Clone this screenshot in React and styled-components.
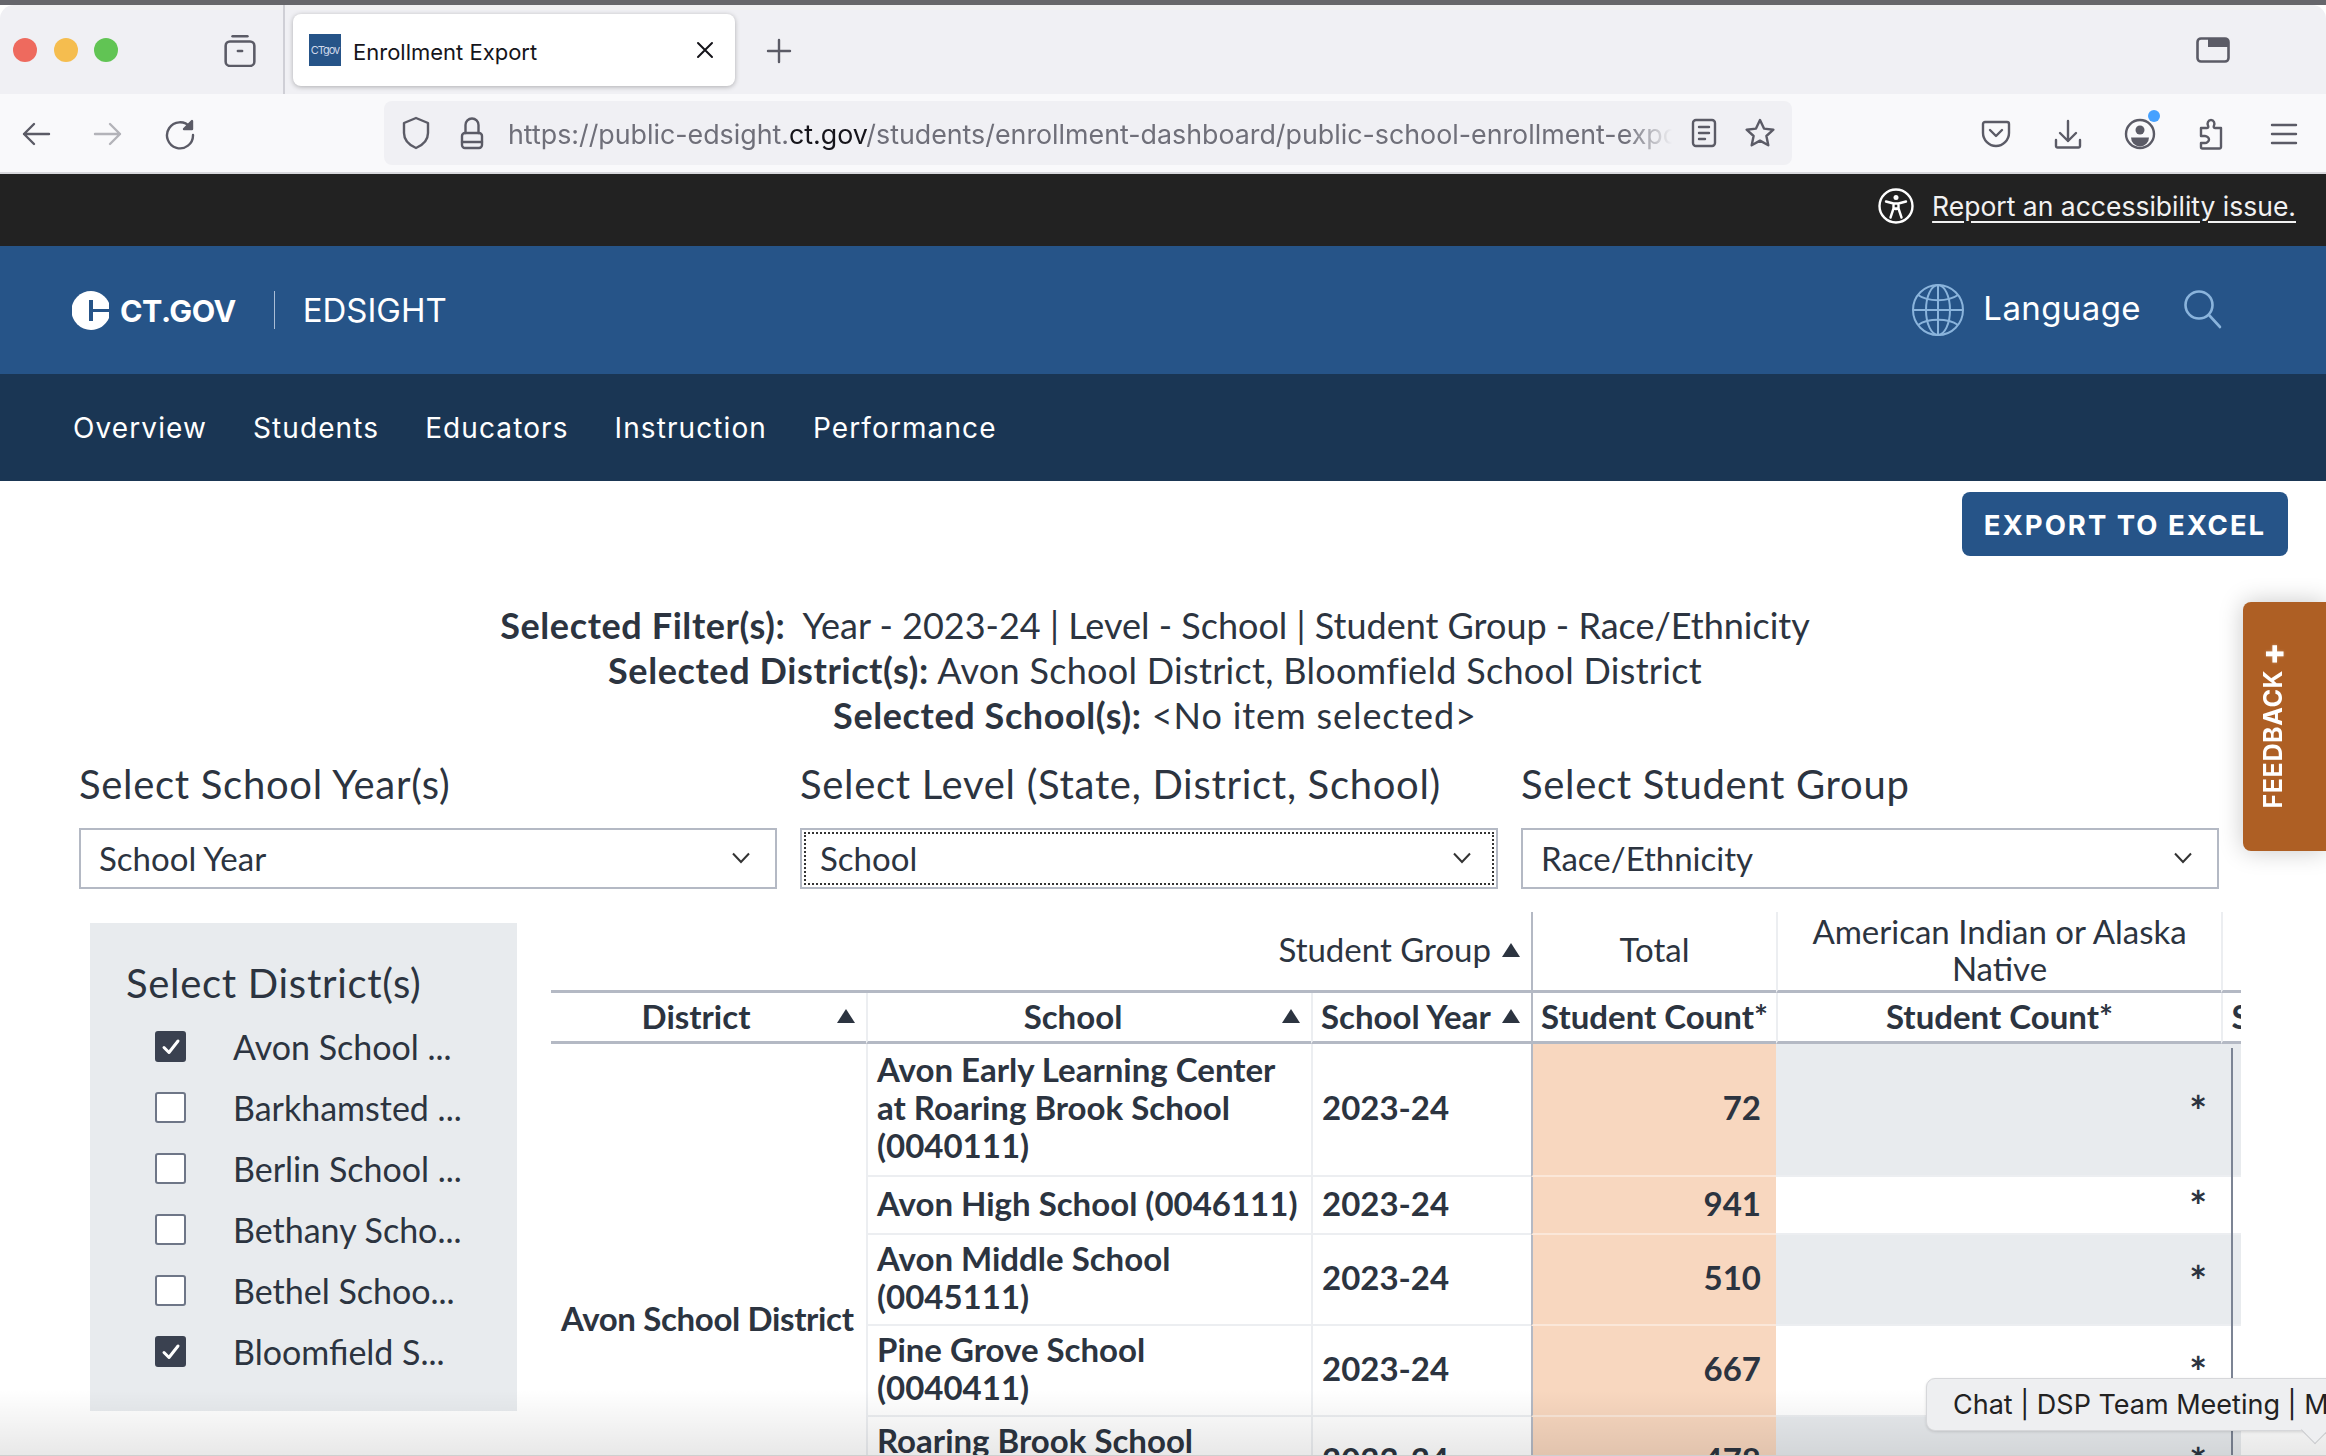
import React from "react";
import styled, { createGlobalStyle } from "styled-components";

const Global = createGlobalStyle`
  html, body { margin: 0; padding: 0; background: #fff; }
  * { box-sizing: border-box; }
  #root { width: 2326px; height: 1456px; overflow: hidden; position: relative; }
`;

const ui = `Inter, "Liberation Sans", sans-serif`;
const body = `Lato, "Noto Sans", sans-serif`;
const ink = "#2c3440";
const rule = "#b4b9c4";
const soft = "#eceef1";

const Page = styled.div`
  width: 2326px;
  height: 1456px;
  position: relative;
  overflow: hidden;
  background: #fff;
  color: ${ink};
  font-family: ${body};
`;

const TopEdge = styled.div`
  height: 5px;
  background: #66666c;
`;

const TabStrip = styled.div`
  height: 89px;
  background: #f0f0f4;
  border-radius: 14px 14px 0 0;
  display: flex;
  align-items: center;
  font-family: ${ui};
`;

const Lights = styled.div`
  display: flex;
  gap: 16.5px;
  padding-left: 13px;
`;

const Light = styled.span`
  width: 24px;
  height: 24px;
  border-radius: 50%;
  background: ${(p) => p.$c};
`;

const ViewSlot = styled.div`
  width: 36px;
  height: 36px;
  margin-left: 104px;
  display: flex;
  align-items: center;
  justify-content: center;
`;

const TabDivider = styled.div`
  width: 2px;
  height: 89px;
  margin-left: 25px;
  background: #cfcfd6;
`;

const Tab = styled.div`
  width: 442px;
  height: 72px;
  margin-left: 8px;
  margin-top: 1px;
  background: #fff;
  border-radius: 8px;
  box-shadow: 0 1px 5px rgba(0, 0, 0, 0.28);
  display: flex;
  align-items: center;
  padding-left: 16px;
  padding-right: 20px;
`;

const Favicon = styled.div`
  width: 32px;
  height: 32px;
  background: #265488;
  color: #cfd8ea;
  font-size: 11px;
  line-height: 32px;
  text-align: center;
  overflow: hidden;
  letter-spacing: -1px;
`;

const TabTitle = styled.span`
  margin-left: 12px;
  padding-top: 3px;
  font-size: 22px;
  color: #15141a;
  flex: 1;
`;

const NewTab = styled.div`
  margin-left: 31px;
  margin-top: 2px;
  display: flex;
`;

const WindowSlot = styled.div`
  margin-left: auto;
  margin-right: 96px;
  display: flex;
`;

const Toolbar = styled.div`
  height: 80px;
  background: #f9f9fb;
  border-bottom: 2px solid #d8d8dc;
  display: flex;
  align-items: center;
  padding: 2px 0 0 18px;
  font-family: ${ui};
`;

const IconGroup = styled.div`
  display: flex;
  gap: ${(p) => p.$gap || 36}px;
`;

const Slot = styled.div`
  width: 36px;
  height: 36px;
  display: flex;
  align-items: center;
  justify-content: center;
  position: relative;
`;

const Dot = styled.span`
  position: absolute;
  right: -2px;
  top: -6px;
  width: 12px;
  height: 12px;
  border-radius: 50%;
  background: #45a1ff;
`;

const UrlBar = styled.div`
  width: 1408px;
  height: 64px;
  margin: -2px 186px 0;
  flex: none;
  background: #f0f0f4;
  border-radius: 8px;
  display: flex;
  align-items: center;
  padding-left: 16px;
  padding-right: 14px;
`;

const UrlIcon = styled.div`
  width: 32px;
  height: 34px;
  display: flex;
  align-items: center;
  justify-content: center;
  flex: none;
  margin-left: ${(p) => p.$ml || 0}px;
  margin-right: ${(p) => p.$mr || 0}px;
`;

const UrlText = styled.div`
  width: 1164px;
  flex: none;
  white-space: nowrap;
  overflow: hidden;
  padding-top: 2px;
  font-size: 26.8px;
  color: #6f6f79;
  mask-image: linear-gradient(to right, #000 96%, transparent);
`;

const Host = styled.span`
  color: #15141a;
`;

const A11yBar = styled.div`
  height: 72px;
  background: #222222;
  display: flex;
  align-items: center;
  justify-content: flex-end;
  padding: 0 30px 9px 0;
  gap: 18px;
  font-family: ${ui};
`;

const A11yLink = styled.a`
  color: #f2f2f2;
  font-size: 26.5px;
  text-decoration: underline;
  text-underline-offset: 5px;
  text-decoration-thickness: 2px;
`;

const BrandBar = styled.header`
  height: 128px;
  background: #265488;
  display: flex;
  align-items: center;
  padding: 0 104px 0 72px;
  color: #fff;
  font-family: ${ui};
`;

const GovMark = styled.span`
  margin-left: 10px;
  font-size: 30.5px;
  font-weight: 700;
  letter-spacing: -0.5px;
`;

const BrandRule = styled.span`
  width: 1px;
  height: 38px;
  margin: 0 28px 0 38px;
  background: #a9bdd6;
`;

const BrandName = styled.span`
  font-size: 33px;
  font-weight: 400;
`;

const BrandRight = styled.div`
  margin-left: auto;
  display: flex;
  align-items: center;
`;

const Lang = styled.span`
  font-size: 33px;
  margin: -5px 43px 0 18px;
  letter-spacing: 0.4px;
`;

const NavBar = styled.nav`
  height: 107px;
  background: #1a3654;
  display: flex;
  align-items: center;
  padding-left: 73px;
  gap: 46px;
  color: #fff;
  font-family: ${ui};
  font-size: 28px;
  letter-spacing: 1.1px;
`;

const ExportRow = styled.div`
  display: flex;
  justify-content: flex-end;
  padding: 11px 38px 0 0;
`;

const ExportButton = styled.button`
  width: 326px;
  height: 64px;
  border: 0;
  border-radius: 8px;
  padding-top: 2px;
  background: #265488;
  color: #fff;
  font-family: ${ui};
  font-weight: 700;
  font-size: 27.5px;
  letter-spacing: 2px;
`;

const Summary = styled.div`
  margin-top: 47px;
  width: 2310px;
  text-align: center;
  font-size: 36px;
  line-height: 45px;
`;

const SummaryLine = styled.div`
  white-space: pre;
  letter-spacing: ${(p) => p.$ls}px;
`;

const Strong = styled.strong`
  font-weight: 700;
  letter-spacing: 0.6px;
`;

const FilterGrid = styled.div`
  margin-top: 23px;
  padding-left: 79px;
  display: grid;
  grid-template-columns: repeat(3, 698px);
  column-gap: 23px;
`;

const Field = styled.div`
  display: flex;
  flex-direction: column;
  gap: 21px;
`;

const FieldLabel = styled.label`
  font-size: 40px;
  line-height: 46px;
  letter-spacing: 0.7px;
  white-space: nowrap;
`;

const Select = styled.div`
  height: 61px;
  border: 2px solid ${rule};
  display: flex;
  align-items: center;
  justify-content: space-between;
  padding: 0 24px 2px 18px;
  font-size: 33px;
  position: relative;
  ${(p) => p.$focus && `outline: 2px dotted #333; outline-offset: -6px;`}
`;

const Lower = styled.div`
  margin-top: 23px;
  display: flex;
  align-items: flex-start;
`;

const DistrictPanel = styled.aside`
  margin: 11px 0 0 90px;
  width: 427px;
  height: 488px;
  background: #e8ebee;
  padding: 36px 0 0 36px;
  flex: none;
`;

const PanelTitle = styled.div`
  font-size: 40px;
  line-height: 48px;
  letter-spacing: 0.7px;
`;

const CheckList = styled.div`
  margin-top: 9px;
  padding-left: 29px;
`;

const CheckRow = styled.div`
  height: 61px;
  display: flex;
  align-items: center;
`;

const Box = styled.span`
  width: 31px;
  height: 31px;
  flex: none;
  border-radius: 3px;
  display: flex;
  align-items: center;
  justify-content: center;
  background: ${(p) => (p.$on ? "#3a4150" : "#fff")};
  border: 2px solid ${(p) => (p.$on ? "#3a4150" : "#6e7687")};
`;

const CheckName = styled.span`
  margin-left: 47px;
  font-size: 34px;
  white-space: nowrap;
`;

const TableClip = styled.div`
  margin-left: 34px;
  width: 1690px;
  height: 640px;
  overflow: hidden;
  flex: none;
  position: relative;
`;

const Table = styled.table`
  table-layout: fixed;
  width: 1916px;
  border-collapse: separate;
  border-spacing: 0;
  font-size: 33px;
  line-height: 38px;
`;

const HeadTop = styled.th`
  height: 81px;
  font-weight: 400;
  line-height: 37px;
  padding: 0 8px 3px;
  text-align: center;
  border-left: ${(p) => (p.$heavy ? `2px solid ${rule}` : p.$plain ? "0" : `2px solid ${soft}`)};
  border-bottom: 3px solid ${rule};
  white-space: ${(p) => (p.$clip ? "nowrap" : "normal")};
`;

const HeadSub = styled.th`
  height: 51px;
  font-weight: 700;
  padding: 0 8px 2px;
  border-left: ${(p) => (p.$heavy ? `2px solid ${rule}` : p.$plain ? "0" : `2px solid ${soft}`)};
  border-bottom: 3px solid ${rule};
  white-space: nowrap;
`;

const HeadInner = styled.div`
  display: flex;
  align-items: center;
  justify-content: ${(p) => (p.$end ? "flex-end" : "flex-start")};
  gap: ${(p) => p.$gap || 0}px;
`;

const HeadText = styled.span`
  flex: ${(p) => (p.$grow ? 1 : "none")};
  text-align: ${(p) => (p.$grow ? "center" : "left")};
  padding-right: ${(p) => p.$pr || 0}px;
`;

const Sort = styled.span`
  display: inline-block;
  width: 0;
  height: 0;
  flex: none;
  margin-right: 3px;
  border-left: 9px solid transparent;
  border-right: 9px solid transparent;
  border-bottom: 14px solid ${ink};
`;

const Row = styled.tr`
  height: ${(p) => p.$h}px;
`;

const DistrictCell = styled.td`
  font-weight: 700;
  padding: 0 10px 4px;
  white-space: nowrap;
  vertical-align: middle;
  letter-spacing: -0.35px;
`;

const TextCell = styled.td`
  font-weight: 700;
  padding: 0 9px 5px;
  border-left: 2px solid ${soft};
  border-bottom: 2px solid ${soft};
`;

const TotalCell = styled.td`
  font-weight: 700;
  text-align: right;
  padding: 0 15px 5px 0;
  background: #f8d7bf;
  border-left: 2px solid ${rule};
  border-bottom: 2px solid #fbe7d9;
`;

const StarCell = styled.td`
  font-weight: 700;
  font-size: 42px;
  line-height: 38px;
  text-align: right;
  padding: 2px 14px 0 0;
  background: ${(p) => (p.$stripe ? "#e8ebee" : "#fff")};
  border-bottom: 2px solid ${soft};
`;

const ScrollLine = styled.div`
  position: absolute;
  left: 1680px;
  top: 136px;
  bottom: 0;
  width: 2px;
  background: #7c8494;
`;

const Feedback = styled.div`
  position: absolute;
  right: 0;
  top: 602px;
  width: 83px;
  height: 249px;
  background: #ae5f24;
  border-radius: 8px 0 0 8px;
  box-shadow: 0 0 24px rgba(0, 0, 0, 0.22);
  display: flex;
  flex-direction: column;
  justify-content: flex-end;
  align-items: flex-start;
  padding: 0 0 43px 15px;
  color: #fff;
  font-family: ${ui};
  font-weight: 700;
  font-size: 25px;
  letter-spacing: 0.6px;
`;

const FeedbackText = styled.span`
  writing-mode: vertical-rl;
  transform: rotate(180deg);
  line-height: 30px;
  white-space: nowrap;
`;

const FeedbackPlus = styled.span`
  font-size: 34px;
  font-weight: 800;
  margin-top: 4px;
  text-shadow: 0 0 3px rgba(255, 255, 255, 0.35);
`;

const BottomShade = styled.div`
  position: absolute;
  left: 0;
  right: 0;
  bottom: 0;
  height: 66px;
  background: linear-gradient(to bottom, rgba(0, 0, 0, 0), rgba(0, 0, 0, 0.09));
  border-bottom: 1px solid #cfcfcf;
  pointer-events: none;
`;

const ChatTip = styled.div`
  position: absolute;
  left: 1926px;
  top: 1378px;
  width: 420px;
  height: 53px;
  background: #eeeff1;
  border: 1px solid #d6d7da;
  border-radius: 9px;
  box-shadow: 0 1px 3px rgba(0, 0, 0, 0.12);
  font-family: ${ui};
  font-size: 27px;
  line-height: 51px;
  padding-left: 26px;
  white-space: nowrap;
  color: #222;
`;

const TipTail = styled.span`
  position: absolute;
  left: 378px;
  top: 41px;
  width: 20px;
  height: 20px;
  background: #eeeff1;
  border-right: 1px solid #c9cacd;
  border-bottom: 1px solid #c9cacd;
  transform: rotate(45deg);
`;

const Ico = ({ s = 32, w, h, vb, children, c = "#5b5b66", sw = 2.4 }) => (
  <svg width={w || s} height={h || s} viewBox={vb || "0 0 32 32"} fill="none" stroke={c} strokeWidth={sw} strokeLinecap="round" strokeLinejoin="round">
    {children}
  </svg>
);

const Chevron = () => (
  <svg width="20" height="12" viewBox="0 0 20 12" fill="none" stroke="#333" strokeWidth="2">
    <path d="M2 1.500l8 8.500 8-8.500" />
  </svg>
);

const Check = () => (
  <svg width="20" height="18" viewBox="0 0 20 18" fill="none" stroke="#fff" strokeWidth="3" strokeLinecap="round" strokeLinejoin="round">
    <path d="M3 9.500l5 5L17 3" />
  </svg>
);

const districts = [
  ["Avon School ...", true],
  ["Barkhamsted ...", false],
  ["Berlin School ...", false],
  ["Bethany Scho...", false],
  ["Bethel Schoo...", false],
  ["Bloomfield S...", true],
];

const rows = [
  { h: 133, name: "Avon Early Learning Center at Roaring Brook School (0040111)", n: 72, s: true },
  { h: 58, name: "Avon High School (0046111)", n: 941, s: false },
  { h: 91, name: "Avon Middle School (0045111)", n: 510, s: true },
  { h: 91, name: "Pine Grove School (0040411)", n: 667, s: false },
  { h: 91, name: "Roaring Brook School (0040211)", n: 478, s: true },
];

export default function App() {
  return (
    <Page>
      <Global />
      <TopEdge />
      <TabStrip>
        <Lights>
          <Light $c="#ee6a5e" />
          <Light $c="#f5bd4f" />
          <Light $c="#61c454" />
        </Lights>
        <ViewSlot>
          <Ico s={34}>
            <path d="M9 3h14" />
            <rect x="2.500" y="8" width="27" height="23" rx="4" />
            <path d="M14 17h4" />
          </Ico>
        </ViewSlot>
        <TabDivider />
        <Tab>
          <Favicon>CTgov</Favicon>
          <TabTitle>Enrollment Export</TabTitle>
          <Ico s={20} vb="0 0 20 20" c="#15141a" sw={2}>
            <path d="M3 3l14 14M17 3L3 17" />
          </Ico>
        </Tab>
        <NewTab>
          <Ico s={26} vb="0 0 26 26">
            <path d="M13 2v22M2 13h22" />
          </Ico>
        </NewTab>
        <WindowSlot>
          <svg width="34" height="26" viewBox="0 0 34 26" fill="none">
            <rect x="1.500" y="1.500" width="31" height="23" rx="3.500" stroke="#5b5b66" strokeWidth="2.600" />
            <path d="M12 1.500h17a3.500 3.500 0 0 1 3.500 3.500v5H12z" fill="#5b5b66" />
          </svg>
        </WindowSlot>
      </TabStrip>
      <Toolbar>
        <IconGroup>
          <Slot>
            <Ico>
              <path d="M29 16H4M14 6L4 16l10 10" />
            </Ico>
          </Slot>
          <Slot>
            <Ico c="#b3b3b9">
              <path d="M3 16h25M18 6l10 10-10 10" />
            </Ico>
          </Slot>
          <Slot>
            <Ico>
              <path d="M26 9a13 13 0 1 0 3 8" />
              <path d="M28 3v8h-8z" fill="#5b5b66" />
            </Ico>
          </Slot>
        </IconGroup>
        <UrlBar>
          <UrlIcon $mr={24}>
            <Ico w={30} h={34} vb="0 0 30 34">
              <path d="M15 2l12 5v10c0 7-5 12-12 15C8 29 3 24 3 17V7z" />
            </Ico>
          </UrlIcon>
          <UrlIcon $mr={20}>
            <Ico w={24} h={34} vb="0 0 24 34">
              <path d="M5.500 17V9a6.500 6.500 0 0 1 13 0v8" />
              <rect x="2" y="17" width="20" height="15" rx="3" />
              <path d="M2 26h20" />
            </Ico>
          </UrlIcon>
          <UrlText>
            https://public-edsight.<Host>ct.gov</Host>/students/enrollment-dashboard/public-school-enrollment-export
          </UrlText>
          <UrlIcon $ml={16} $mr={24}>
            <Ico w={26} h={30} vb="0 0 26 30">
              <rect x="2" y="2" width="22" height="26" rx="3" />
              <path d="M8 9h10M8 15h10M8 21h6" />
            </Ico>
          </UrlIcon>
          <UrlIcon>
            <Ico>
              <path d="M16 3l4 8.600 9.400 1.100-7 6.300 1.900 9.300L16 23.600l-8.300 4.700 1.900-9.300-7-6.300 9.400-1.100z" />
            </Ico>
          </UrlIcon>
        </UrlBar>
        <IconGroup $gap={36}>
          <Slot>
            <Ico w={30} h={28} vb="0 0 30 28">
              <path d="M4 2h22a2 2 0 0 1 2 2v9c0 7-6 13-13 13S2 20 2 13V4a2 2 0 0 1 2-2z" />
              <path d="M9 10l6 6 6-6" />
            </Ico>
          </Slot>
          <Slot>
            <Ico>
              <path d="M16 3v20M8 15l8 8 8-8" />
              <path d="M4 22v6a1.500 1.500 0 0 0 1.500 1.500h21A1.500 1.500 0 0 0 28 28v-6" />
            </Ico>
          </Slot>
          <Slot>
            <Ico>
              <circle cx="16" cy="16" r="14" />
              <circle cx="16" cy="12" r="4.500" fill="#5b5b66" stroke="none" />
              <path d="M7 19.500h18a9 9 0 0 1-18 0z" fill="#5b5b66" stroke="none" />
            </Ico>
            <Dot />
          </Slot>
          <Slot>
            <Ico>
              <path d="M5 10h6c1.500 0 1.500-1.500 1-2.500-1-2 0-5.500 3-5.500s4 3.500 3 5.500c-.5 1-.5 2.500 1 2.500h6v19a1.500 1.500 0 0 1-1.500 1.500H6.500A1.500 1.500 0 0 1 5 29v-4h4c2 0 4-2 4-3.500S11 18 9 18H5z" />
            </Ico>
          </Slot>
          <Slot>
            <Ico>
              <path d="M4 7h24M4 16h24M4 25h24" />
            </Ico>
          </Slot>
        </IconGroup>
      </Toolbar>
      <A11yBar>
        <svg width="36" height="36" viewBox="0 0 36 36" fill="none" stroke="#fff" strokeWidth="2.400" strokeLinecap="round" strokeLinejoin="round">
          <circle cx="18" cy="18" r="16.500" />
          <circle cx="18" cy="9.500" r="2.500" fill="#fff" stroke="none" />
          <path d="M8 13.500l7.500 2v5l-3 9M28 13.500l-7.500 2v5l3 9M15.500 15.500h5M15.500 20.500h5L18 21z" />
        </svg>
        <A11yLink>Report an accessibility issue.</A11yLink>
      </A11yBar>
      <BrandBar>
        <svg width="38" height="39" viewBox="0 0 38 39">
          <path d="M19 0a19.500 19.500 0 0 0 0 39c8 0 15-5 18-12V12C34 5 27 0 19 0z" fill="#fff" />
          <path d="M17 9h4v9h17v3H21v9h-4z" fill="#265488" />
        </svg>
        <GovMark>CT.GOV</GovMark>
        <BrandRule />
        <BrandName>EDSIGHT</BrandName>
        <BrandRight>
          <svg width="54" height="54" viewBox="0 0 54 54" fill="none" stroke="#8ab4dc" strokeWidth="2">
            <circle cx="27" cy="27" r="25" />
            <ellipse cx="27" cy="27" rx="12" ry="25" />
            <path d="M27 2v50M2 27h50" />
            <path d="M7 12c10 7 30 7 40 0M7 42c10-7 30-7 40 0" />
          </svg>
          <Lang>Language</Lang>
          <svg width="38" height="40" viewBox="0 0 38 40" fill="none" stroke="#8ab4dc" strokeWidth="2.600" strokeLinecap="round">
            <circle cx="15" cy="15" r="13.500" />
            <path d="M25 25l11 12" />
          </svg>
        </BrandRight>
      </BrandBar>
      <NavBar>
        <span>Overview</span>
        <span>Students</span>
        <span>Educators</span>
        <span>Instruction</span>
        <span>Performance</span>
      </NavBar>
      <ExportRow>
        <ExportButton>EXPORT TO EXCEL</ExportButton>
      </ExportRow>
      <Summary>
        <SummaryLine $ls={0}>
          <Strong>Selected Filter(s):</Strong>  Year - 2023-24 | Level - School | Student Group - Race/Ethnicity
        </SummaryLine>
        <SummaryLine $ls={0.3}>
          <Strong>Selected District(s):</Strong> Avon School District, Bloomfield School District
        </SummaryLine>
        <SummaryLine $ls={0.9}>
          <Strong>Selected School(s):</Strong> &lt;No item selected&gt;
        </SummaryLine>
      </Summary>
      <FilterGrid>
        <Field>
          <FieldLabel>Select School Year(s)</FieldLabel>
          <Select>
            School Year
            <Chevron />
          </Select>
        </Field>
        <Field>
          <FieldLabel>Select Level (State, District, School)</FieldLabel>
          <Select $focus>
            School
            <Chevron />
          </Select>
        </Field>
        <Field>
          <FieldLabel>Select Student Group</FieldLabel>
          <Select>
            Race/Ethnicity
            <Chevron />
          </Select>
        </Field>
      </FilterGrid>
      <Lower>
        <DistrictPanel>
          <PanelTitle>Select District(s)</PanelTitle>
          <CheckList>
            {districts.map(([name, on]) => (
              <CheckRow key={name}>
                <Box $on={on}>{on && <Check />}</Box>
                <CheckName>{name}</CheckName>
              </CheckRow>
            ))}
          </CheckList>
        </DistrictPanel>
        <TableClip>
          <Table>
            <colgroup>
              <col style={{ width: 315 }} />
              <col style={{ width: 445 }} />
              <col style={{ width: 220 }} />
              <col style={{ width: 245 }} />
              <col style={{ width: 445 }} />
              <col style={{ width: 246 }} />
            </colgroup>
            <thead>
              <tr>
                <HeadTop colSpan={3} $plain>
                  <HeadInner $end $gap={11}>
                    <span>Student Group</span>
                    <Sort />
                  </HeadInner>
                </HeadTop>
                <HeadTop $heavy>Total</HeadTop>
                <HeadTop>American Indian or Alaska Native</HeadTop>
                <HeadTop $clip>Asian</HeadTop>
              </tr>
              <tr>
                <HeadSub $plain>
                  <HeadInner>
                    <HeadText $grow $pr={4}>District</HeadText>
                    <Sort />
                  </HeadInner>
                </HeadSub>
                <HeadSub>
                  <HeadInner>
                    <HeadText $grow $pr={12}>School</HeadText>
                    <Sort />
                  </HeadInner>
                </HeadSub>
                <HeadSub>
                  <HeadInner $gap={11}>
                    <HeadText>School Year</HeadText>
                    <Sort />
                  </HeadInner>
                </HeadSub>
                <HeadSub $heavy>Student Count*</HeadSub>
                <HeadSub>Student Count*</HeadSub>
                <HeadSub>Student Count*</HeadSub>
              </tr>
            </thead>
            <tbody>
              {rows.map((r, i) => (
                <Row key={r.name} $h={r.h}>
                  {i === 0 && <DistrictCell rowSpan={6}>Avon School District</DistrictCell>}
                  <TextCell>{r.name}</TextCell>
                  <TextCell>2023-24</TextCell>
                  <TotalCell>{r.n}</TotalCell>
                  <StarCell $stripe={r.s}>*</StarCell>
                  <StarCell $stripe={r.s}>*</StarCell>
                </Row>
              ))}
              <Row $h={87}>
                <TextCell />
                <TextCell />
                <TotalCell />
                <StarCell />
                <StarCell />
              </Row>
            </tbody>
          </Table>
          <ScrollLine />
        </TableClip>
      </Lower>
      <Feedback>
        <FeedbackText>
          FEEDBACK<FeedbackPlus>+</FeedbackPlus>
        </FeedbackText>
      </Feedback>
      <BottomShade />
      <ChatTip>
        Chat | DSP Team Meeting | M
        <TipTail />
      </ChatTip>
    </Page>
  );
}
